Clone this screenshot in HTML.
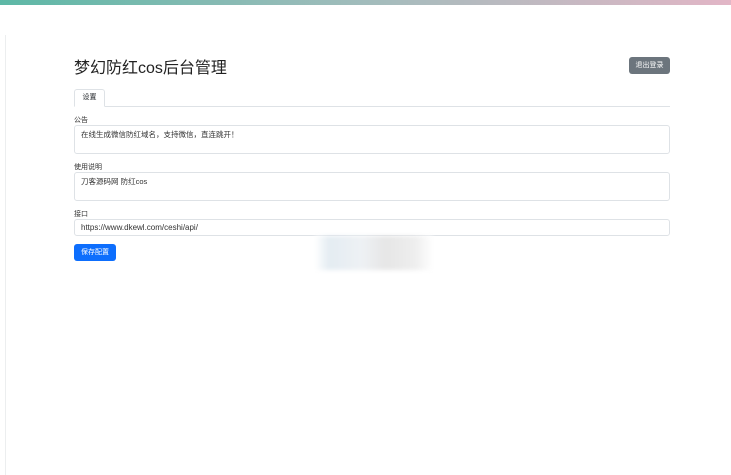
<!DOCTYPE html>
<html><head><meta charset="utf-8"><style>
*{box-sizing:border-box;margin:0;padding:0}
body{width:731px;height:475px;background:#fff;font-family:"Liberation Sans","Noto Sans CJK SC",sans-serif;color:#212529;position:relative;overflow:hidden}
.bar{position:absolute;left:0;top:0;width:731px;height:5px;background:linear-gradient(90deg,#5db8a6,#a2bcbc 50%,#e2b6c6)}
.side{position:absolute;left:5px;top:35px;width:1px;height:440px;background:#eceeef}
.abs{position:absolute}
h1{position:absolute;left:74px;top:54px;font-size:16px;font-weight:400;color:#222}
.logout{left:629px;top:57px;width:41px;height:17px;background:#6c757d;border-radius:3px;color:#fff;font-size:7px;line-height:17px;text-align:center}
.tabline{left:74px;top:106px;width:596px;height:1px;background:#dee2e6}
.tab{left:74px;top:89px;width:31px;height:18px;border:1px solid #dee2e6;border-bottom:1px solid #fff;border-radius:3px 3px 0 0;background:#fff;font-size:7px;line-height:16px;text-align:center}
.lbl{font-size:7px;color:#333}
.fc{left:74px;width:596px;border:1px solid #dee2e6;border-radius:3px;font-size:7.5px;padding:3px 6px;color:#333;background:#fff}
.save{left:74px;top:244px;width:42px;height:17px;background:#0d6efd;border-radius:3px;color:#fff;font-size:7px;line-height:17px;text-align:center}
.blur{left:315px;top:236px;width:118px;height:34px;background:linear-gradient(90deg,#fff,#e4ecf2 12%,#eef1f4 40%,#e6e6e6 60%,#eee 85%,#fff);filter:blur(2px)}
</style></head><body>
<div class="bar"></div>
<div class="side"></div>
<h1>梦幻防红cos后台管理</h1>
<div class="abs logout">退出登录</div>
<div class="abs tabline"></div>
<div class="abs tab">设置</div>
<div class="abs lbl" style="left:74px;top:115px">公告</div>
<div class="abs fc" style="top:125px;height:29px">在线生成微信防红域名，支持微信，直连跳开！</div>
<div class="abs lbl" style="left:74px;top:162px">使用说明</div>
<div class="abs fc" style="top:172px;height:29px">刀客源码网 防红cos</div>
<div class="abs lbl" style="left:74px;top:209px">接口</div>
<div class="abs fc" style="top:219px;height:17px;padding-top:3px;font-size:8px">https://www.dkewl.com/ceshi/api/</div>
<div class="abs save">保存配置</div>
<div class="abs blur"></div>
</body></html>
